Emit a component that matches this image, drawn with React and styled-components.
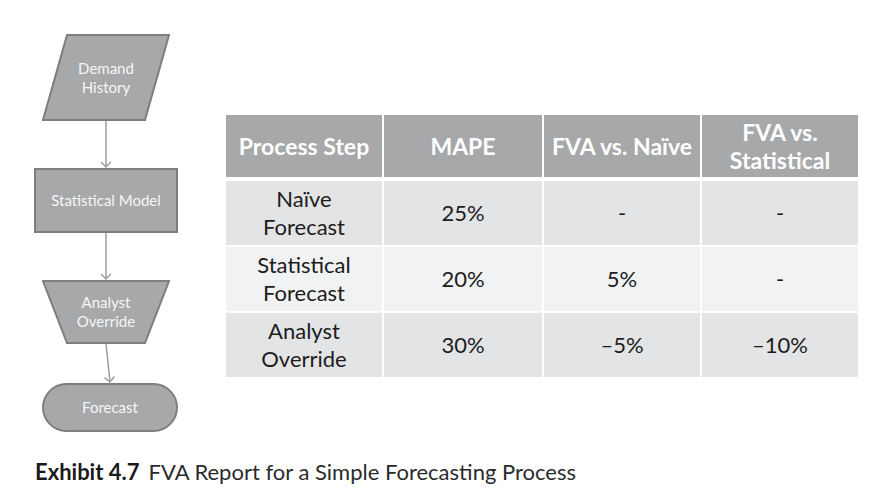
import styled, { createGlobalStyle } from "styled-components"

const GlobalStyle = createGlobalStyle`
  body {
    margin: 0;
    background: #fff;
    font-family: Lato, "Open Sans", sans-serif;
  }
`

const Page = styled.div`
  width: 876px;
  height: 501px;
  display: flex;
  flex-direction: column;
`

const Content = styled.div`
  display: flex;
  height: 450px;
`

const Diagram = styled.div`
  position: relative;
  width: 226px;
  height: 450px;
  flex-shrink: 0;
`

const Connectors = styled.svg`
  position: absolute;
  top: 0;
  left: 0;
`

const NodeBox = styled.div`
  position: absolute;
  display: flex;
  align-items: center;
  justify-content: center;
`

const NodeShape = styled.svg`
  position: absolute;
  inset: 0;
`

const NodeLabel = styled.span`
  position: relative;
  color: #f6f6f6;
  font-size: 15px;
  line-height: 19px;
  text-align: center;
`

const FILL = "#a7a8aa"
const STROKE = "#7d7e80"

function Node({ x, y, w, h, shape, children }) {
  return (
    <NodeBox style={{ left: x, top: y, width: w, height: h }}>
      <NodeShape width={w} height={h} viewBox={`0 0 ${w} ${h}`}>
        {shape === "para" && (
          <polygon
            points={`25,1 ${w - 1},1 ${w - 25},${h - 1} 1,${h - 1}`}
            fill={FILL}
            stroke={STROKE}
            strokeWidth="2"
          />
        )}
        {shape === "rect" && (
          <rect x="1" y="1" width={w - 2} height={h - 2} fill={FILL} stroke={STROKE} strokeWidth="2" />
        )}
        {shape === "trap" && (
          <polygon
            points={`1,1 ${w - 1},1 ${w - 25},${h - 1} 25,${h - 1}`}
            fill={FILL}
            stroke={STROKE}
            strokeWidth="2"
          />
        )}
        {shape === "pill" && (
          <rect
            x="1"
            y="1"
            width={w - 2}
            height={h - 2}
            rx={(h - 2) / 2}
            fill={FILL}
            stroke={STROKE}
            strokeWidth="2"
          />
        )}
      </NodeShape>
      <NodeLabel>{children}</NodeLabel>
    </NodeBox>
  )
}

function Arrow({ x1, y1, x2, y2 }) {
  const a = Math.atan2(y2 - y1, x2 - x1)
  const len = 7
  const p1 = [x2 - len * Math.cos(a - 0.78), y2 - len * Math.sin(a - 0.78)]
  const p2 = [x2 - len * Math.cos(a + 0.78), y2 - len * Math.sin(a + 0.78)]
  return (
    <g stroke="#9c9d9f" strokeWidth="1.5" fill="none">
      <line x1={x1} y1={y1} x2={x2} y2={y2} />
      <polyline points={`${p1[0]},${p1[1]} ${x2},${y2} ${p2[0]},${p2[1]}`} />
    </g>
  )
}

const TableWrap = styled.div`
  padding-top: 115px;
`

const Grid = styled.div`
  display: grid;
  grid-template-columns: 156px 158px 156px 156px;
  grid-auto-rows: 64px;
  gap: 2px;
  width: 632px;
`

const Cell = styled.div`
  display: flex;
  align-items: center;
  justify-content: center;
  text-align: center;
  background: ${({ $head, $shade }) => ($head ? "#a7a8aa" : $shade ? "#e3e4e5" : "#f1f2f3")};
  color: ${({ $head }) => ($head ? "#fff" : "#1c1c1c")};
  font-size: ${({ $head }) => ($head ? "23px" : "22px")};
  font-weight: ${({ $head }) => ($head ? 700 : 400)};
  line-height: 28px;
  margin-bottom: ${({ $head }) => ($head ? "2px" : "0")};
  height: ${({ $head }) => ($head ? "62px" : "auto")};
`

const Caption = styled.div`
  padding: 8px 0 0 35px;
  font-size: 22px;
  color: #2b2b2b;
  white-space: nowrap;
`

const CaptionLabel = styled.strong`
  font-weight: 700;
  color: #1a1a1a;
  margin-right: 9px;
`

const headers = ["Process Step", "MAPE", "FVA vs. Naïve", ["FVA vs.", "Statistical"]]

const rows = [
  [["Naïve", "Forecast"], "25%", "-", "-"],
  [["Statistical", "Forecast"], "20%", "5%", "-"],
  [["Analyst", "Override"], "30%", "\u20135%", "\u201310%"],
]

function Lines({ value }) {
  if (!Array.isArray(value)) return value
  return (
    <span>
      {value[0]}
      <br />
      {value[1]}
    </span>
  )
}

export default function App() {
  return (
    <Page>
      <GlobalStyle />
      <Content>
        <Diagram>
          <Connectors width="226" height="450">
            <Arrow x1={106} y1={121} x2={106} y2={167} />
            <Arrow x1={106} y1={233} x2={106} y2={279} />
            <Arrow x1={106} y1={344} x2={110} y2={382} />
          </Connectors>
          <Node x={42} y={34} w={128} h={87} shape="para">
            Demand
            <br />
            History
          </Node>
          <Node x={34} y={168} w={144} h={65} shape="rect">
            Statistical Model
          </Node>
          <Node x={42} y={280} w={128} h={64} shape="trap">
            Analyst
            <br />
            Override
          </Node>
          <Node x={42} y={383} w={136} h={49} shape="pill">
            Forecast
          </Node>
        </Diagram>
        <TableWrap>
          <Grid>
            {headers.map((h, i) => (
              <Cell key={i} $head>
                <Lines value={h} />
              </Cell>
            ))}
            {rows.map((r, ri) =>
              r.map((c, ci) => (
                <Cell key={`${ri}-${ci}`} $shade={ri !== 1}>
                  <Lines value={c} />
                </Cell>
              ))
            )}
          </Grid>
        </TableWrap>
      </Content>
      <Caption>
        <CaptionLabel>Exhibit 4.7</CaptionLabel>FVA Report for a Simple Forecasting Process
      </Caption>
    </Page>
  )
}
